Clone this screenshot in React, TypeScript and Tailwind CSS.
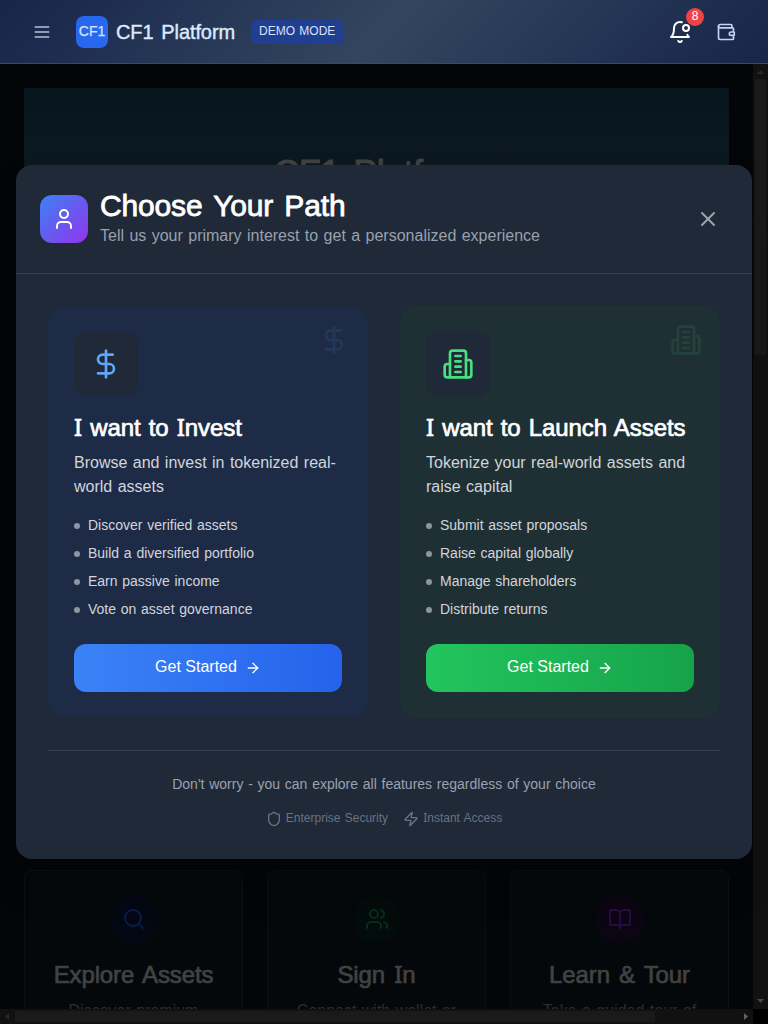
import React from "react";
import { User, X, DollarSign, ArrowRight, Shield, Zap, Search, Users, BookOpen } from "lucide-react";

const stroke = {
  fill: "none",
  stroke: "currentColor",
  strokeWidth: 2,
  strokeLinecap: "round" as const,
  strokeLinejoin: "round" as const,
  viewBox: "0 0 24 24",
};

function MenuIcon() {
  return (
    <svg {...stroke} className="size-5 text-[#b3c1d8]">
      <path d="M4 6h16M4 12h16M4 18h16" />
    </svg>
  );
}

function Building({ className }: { className: string }) {
  return (
    <svg {...stroke} className={className}>
      <path d="M6 22V4a2 2 0 0 1 2-2h8a2 2 0 0 1 2 2v18Z" />
      <path d="M6 12H4a2 2 0 0 0-2 2v6a2 2 0 0 0 2 2h2" />
      <path d="M18 9h2a2 2 0 0 1 2 2v9a2 2 0 0 1-2 2h-2" />
      <path d="M10 6h4M10 10h4M10 14h4M10 18h4" />
    </svg>
  );
}

function BellDot() {
  return (
    <svg {...stroke} className="size-6 text-white">
      <path d="M19.4 14.9C20.2 16.4 21 17 21 17H3s3-2 3-9c0-3.3 2.7-6 6-6 .7 0 1.3.1 1.9.3" />
      <path d="M10.3 21a1.94 1.94 0 0 0 3.4 0" />
      <circle cx="18" cy="8" r="3" />
    </svg>
  );
}

function WalletIcon() {
  return (
    <svg {...stroke} className="size-5 text-[#c5d5ee]">
      <path d="M19 7V4a1 1 0 0 0-1-1H5a2 2 0 0 0 0 4h15a1 1 0 0 1 1 1v4h-3a2 2 0 0 0 0 4h3a1 1 0 0 0 1-1v-2a1 1 0 0 0-1-1" />
      <path d="M3 5v14a2 2 0 0 0 2 2h15a1 1 0 0 0 1-1v-4" />
    </svg>
  );
}

/* Capital I with serifs */
const I = () => <span className="font-['Noto_Sans',sans-serif] leading-none">I</span>;

function Header() {
  return (
    <header className="flex h-16 shrink-0 items-center border-b border-[#3b4963] bg-[linear-gradient(135deg,#172549_0%,#334560_50%,#172549_100%)] px-8">
      <MenuIcon />
      <div className="ml-6 flex size-8 items-center justify-center rounded-lg bg-[#2868ef] text-sm text-[#d5e3fb] [-webkit-text-stroke:0.25px]">
        <span className="-mt-px">CF1</span>
      </div>
      <h1 className="ml-2 text-xl tracking-[-0.1px] text-[#dbeafe] [word-spacing:0.12em] [-webkit-text-stroke:0.4px]">CF1 Platform</h1>
      <span className="ml-4 flex h-6 items-center rounded-md bg-[#213f91] px-2 pb-0.5 text-xs text-[#d5e3fb]">DEMO MODE</span>
      <div className="relative ml-auto">
        <BellDot />
        <span className="absolute -top-3 -right-3 flex size-[18px] items-center justify-center rounded-full bg-[#ef4444] pb-px text-xs text-white">8</span>
      </div>
      <div className="ml-6">
        <WalletIcon />
      </div>
    </header>
  );
}

const features = [
  { title: <>Explore Assets</>, text: "Discover premium", icon: Search, tone: "bg-[#030812] text-[#091d4b]" },
  { title: <>Sign <I />n</>, text: "Connect with wallet or", icon: Users, tone: "bg-[#030c0b] text-[#042f18]" },
  { title: <>Learn &amp; Tour</>, text: "Take a guided tour of", icon: BookOpen, tone: "bg-[#0b0612] text-[#290b42]" },
];

function Backdrop() {
  return (
    <div className="grid min-h-0 flex-1 grid-cols-[753px_15px] grid-rows-[945px_15px] bg-[#030509]">
      <main className="flex flex-col overflow-hidden p-6 pb-0">
        <section className="flex h-[757px] shrink-0 justify-center bg-[linear-gradient(180deg,#07151d,#0e1b21_110px)] pt-[66px]">
          <h2 className="ml-[3px] text-4xl tracking-[-0.6px] text-[#414141] [word-spacing:0.12em] [-webkit-text-stroke:1px]">CF1 Platform</h2>
        </section>
        <section className="mt-6 grid shrink-0 grid-cols-3 gap-6 pt-px">
          {features.map(({ title, text, icon: Icon, tone }, i) => (
            <article key={i} className="flex h-64 flex-col items-center rounded-lg border border-[#0c0f13] bg-[#05080b] pt-6">
              <div className={`flex size-12 items-center justify-center rounded-full ${tone}`}>
                <Icon className="size-6" />
              </div>
              <h3 className="mt-4 text-2xl tracking-[-0.12px] text-[#424242] [word-spacing:0.11em] [-webkit-text-stroke:0.7px]">{title}</h3>
              <p className="mt-2 text-[#2b2d2f]">{text}</p>
            </article>
          ))}
        </section>
      </main>
      <div className="flex flex-col items-center justify-between bg-[#111111]">
        <div className="flex h-[291px] flex-col items-center">
          <svg className="h-[15px] w-[15px]" viewBox="0 0 15 15"><path d="M4 10 7.5 6 11 10Z" fill="#292929" /></svg>
          <div className="w-[11px] flex-1 bg-[#1a1a1a]" />
        </div>
        <svg className="h-[15px] w-[15px]" viewBox="0 0 15 15"><path d="M4 5 7.5 9 11 5Z" fill="#484848" /></svg>
      </div>
      <div className="flex items-center bg-[#111111]">
        <svg className="h-[15px] w-[15px]" viewBox="0 0 15 15"><path d="M9 4 5 7.5 9 11Z" fill="#292929" /></svg>
        <div className="h-[11px] w-[640px] bg-[#1a1a1a]" />
        <svg className="ml-auto h-[15px] w-[15px]" viewBox="0 0 15 15"><path d="M6 4 10 7.5 6 11Z" fill="#606060" /></svg>
      </div>
      <div className="bg-black" />
    </div>
  );
}

type PathProps = {
  icon: React.ReactNode;
  mark: React.ReactNode;
  title: React.ReactNode;
  description: string;
  points: string[];
  card: string;
  button: string;
};

function PathCard({ icon, mark, title, description, points, card, button }: PathProps) {
  return (
    <div className={`relative flex-1 rounded-2xl p-[26px] ${card}`}>
      <div className="absolute top-[18px] right-[18px] opacity-10">{mark}</div>
      <div className="flex size-16 items-center justify-center rounded-xl bg-[#1f2937]">{icon}</div>
      <h3 className="mt-4 h-8 text-2xl leading-8 tracking-[-0.05px] whitespace-nowrap text-white [word-spacing:0.06em] [-webkit-text-stroke:0.7px]">{title}</h3>
      <p className="mt-[7px] mb-4 text-base text-gray-300">{description}</p>
      <ul className="flex flex-col gap-2 text-sm text-gray-300 [word-spacing:0.06em]">
        {points.map((point) => (
          <li key={point} className="flex h-5 items-center">
            <span className="mt-px mr-2 size-1.5 rounded-full bg-gray-400 opacity-90" />
            <span className="-mt-px">{point}</span>
          </li>
        ))}
      </ul>
      <button className={`mt-[25px] flex h-12 w-full items-center justify-center gap-2 rounded-xl text-white ${button}`}>
        <span className="-mt-0.5">Get Started</span>
        <ArrowRight className="size-4" />
      </button>
    </div>
  );
}

function PathDialog() {
  return (
    <div className="absolute top-[165px] left-4 w-[736px] rounded-2xl bg-[#1f2937] shadow-2xl">
      <div className="flex h-[109px] items-center border-b border-[#374151] px-6">
        <div className="flex size-12 items-center justify-center rounded-xl bg-linear-to-br/srgb from-[#3b82f6] to-[#9333ea]">
          <User className="size-6 text-white" />
        </div>
        <div className="ml-3">
          <h2 className="-mt-px mb-px text-3xl leading-9 tracking-[-0.15px] text-white [word-spacing:0.1em] [-webkit-text-stroke:0.8px]">Choose Your Path</h2>
          <p className="-mt-px mb-px text-gray-400">Tell us your primary interest to get a personalized experience</p>
        </div>
        <X className="mr-2 ml-auto size-6 text-[#9ca3af]" />
      </div>
      <div className="p-8">
        <div className="flex gap-8">
          <PathCard
            icon={<DollarSign className="size-8 text-[#60a5fa]" />}
            mark={<DollarSign className="size-8 text-[#60a5fa]" />}
            title={<><I /> want to <I />nvest</>}
            description="Browse and invest in tokenized real-world assets"
            points={["Discover verified assets", "Build a diversified portfolio", "Earn passive income", "Vote on asset governance"]}
            card="bg-[#1e2b47]"
            button="bg-linear-to-r/srgb from-[#3b82f6] to-[#2563eb]"
          />
          <PathCard
            icon={<Building className="size-8 text-[#4ade80]" />}
            mark={<Building className="size-8 text-[#4ade80]" />}
            title={<><I /> want to Launch Assets</>}
            description="Tokenize your real-world assets and raise capital"
            points={["Submit asset proposals", "Raise capital globally", "Manage shareholders", "Distribute returns"]}
            card="bg-[#1f3034]"
            button="bg-linear-to-r/srgb from-[#22c55e] to-[#16a34a]"
          />
        </div>
        <div className="mt-8 flex flex-col items-center border-t border-[#374151] pt-6">
          <p className="-mt-px mb-px text-sm text-gray-400 [word-spacing:0.06em]">Don't worry - you can explore all features regardless of your choice</p>
          <div className="mt-4 flex h-4 items-center gap-4 text-xs text-gray-500">
            <div className="flex items-center gap-1">
              <Shield className="size-4" />
              <span className="-mt-0.5">Enterprise Security</span>
            </div>
            <div className="-ml-px flex items-center gap-1">
              <Zap className="size-4" />
              <span className="-mt-0.5"><I />nstant Access</span>
            </div>
          </div>
        </div>
      </div>
    </div>
  );
}

export default function App() {
  return (
    <div className="relative flex h-[1024px] w-[768px] flex-col overflow-hidden bg-black font-['Liberation_Sans',Arial,sans-serif] [word-spacing:0.06em]">
      <Header />
      <Backdrop />
      <PathDialog />
    </div>
  );
}
